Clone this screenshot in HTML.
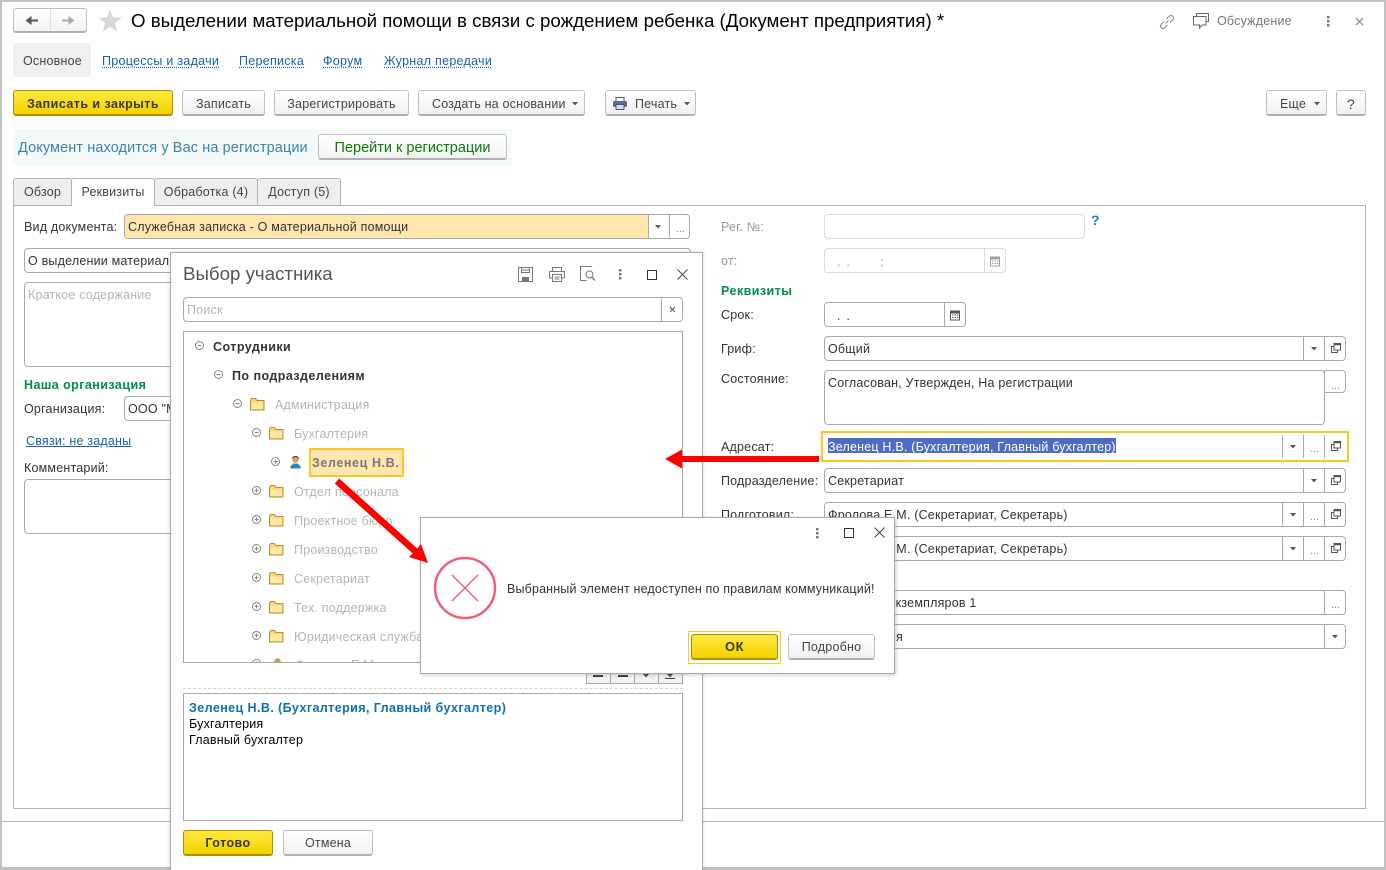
<!DOCTYPE html>
<html lang="ru"><head><meta charset="utf-8"><title>Документ</title>
<style>
html,body{margin:0;padding:0;background:#fff}
#p{position:relative;width:1386px;height:870px;overflow:hidden;background:#fff;font:12.5px/16px "Liberation Sans",sans-serif;color:#333;letter-spacing:.2px}
#p div,#p a,#p span.t{position:absolute;box-sizing:border-box}
.t{white-space:nowrap;height:16px}
.b{height:26px;border:1px solid #c0c0c0;border-bottom:2px solid #b0b0b0;border-radius:3px;background:linear-gradient(#fff,#f1f1f1);text-align:center;line-height:24px;white-space:nowrap;color:#444}
.b.lo{line-height:26px}
.y{border:1px solid #a8900a;border-bottom:2px solid #a8900a;background:linear-gradient(#ffe93f,#f3d000);font-weight:bold;color:#3a3a1a;letter-spacing:.45px}
.f{border:1px solid #a9a9a9;border-radius:4px;background:#fff;height:25px}
.l{border:1px solid #dcdcdc}
.s{width:1px;background:#a9a9a9}
.g{color:#00903f;font-weight:bold;letter-spacing:.45px}
.lnk{color:#1a5fb0;text-decoration:underline dotted;text-underline-offset:2px;letter-spacing:.28px}
.tab{height:27px;top:178px;border:1px solid #b5b5b5;border-bottom:none;border-radius:3px 3px 0 0;background:#eee;text-align:center;line-height:26px;color:#444}
.mut{color:#b5b5b5}
.el{color:#777;font-size:10px;letter-spacing:.2px}
.bd{font-weight:bold;letter-spacing:.45px}
svg{position:absolute;overflow:visible}
</style></head><body>
<div id="p">
<svg width="0" height="0" style="left:0;top:0"><defs>
<g id="dd"><path d="M0 0h6L3 3.500z" fill="#555"/></g>
<g id="op" fill="none" stroke="#555"><path d="M2.500 3.500h-2v6h6v-2"/><path d="M3 .5h6.500v6.500H3z" fill="#fff"/><path d="M3 1.500h6.500" stroke-width="1.500"/></g>
<g id="fo"><path d="M.5 2.500v9.500h13.500v-9.500h-7l-1.500-2h-4z" fill="#f7d67e" stroke="#bd8c2e"/><path d="M1.500 4.500h11.500v6.500h-11.500z" fill="#fde9a6"/></g>
<g id="pl" fill="none" stroke="#888"><circle cx="4.500" cy="4.500" r="4"/><path d="M2.500 4.500h4M4.500 2.500v4"/></g>
<g id="mi" fill="none" stroke="#888"><circle cx="4.500" cy="4.500" r="4"/><path d="M2.500 4.500h4"/></g>
<g id="dots" fill="#777"><rect x="0" y="0" width="2.500" height="2.500"/><rect x="0" y="4" width="2.500" height="2.500"/><rect x="0" y="8" width="2.500" height="2.500"/></g>
<g id="cal"><path d="M.5 2h9v9h-9z" fill="#fff" stroke="#555"/><path d="M.5 1.500h9v3h-9z" fill="#555"/><path d="M2 6h1.500M4.500 6h1.500M7 6h1.500M2 8.500h1.500M4.500 8.500h1.500M7 8.500h1.500" stroke="#555"/></g>
</defs></svg>

<!-- outer frame -->
<div style="left:0;top:0;width:1386px;height:870px;border:2px solid #c0c0c0;border-bottom-width:3px"></div>

<!-- header -->
<div style="left:13px;top:8px;width:74px;height:25px;border:1px solid #c0c0c0;border-bottom:2px solid #b0b0b0;border-radius:3px;background:linear-gradient(#fff,#f3f3f3)"></div>
<div class="s" style="left:50px;top:9px;height:22px;background:#ddd"></div>
<svg style="left:25px;top:15px" width="14" height="11"><path d="M13 5.500H5" stroke="#555" stroke-width="2"/><path d="M6.500 1L.5 5.500l6 4.500z" fill="#555"/></svg>
<svg style="left:61px;top:15px" width="14" height="11"><path d="M1 5.500h8" stroke="#aaa" stroke-width="2"/><path d="M7.500 1l6 4.500-6 4.500z" fill="#aaa"/></svg>
<svg style="left:98px;top:9px" width="24" height="23"><path d="M12 0l3 8.500 9 .2-7.200 5.400 2.600 8.800L12 17.600 4.600 22.900l2.600-8.800L0 8.700l9-.2z" fill="#d8d8d8"/></svg>
<span class="t" style="left:131px;top:10px;height:22px;font-size:18.700px;line-height:22px;color:#000;letter-spacing:0">О выделении материальной помощи в связи с рождением ребенка (Документ предприятия) *</span>
<svg style="left:1159px;top:14px" width="16" height="16" fill="none" stroke="#888"><path d="M6.500 9.500l3-3M5 7.500l-3 3a2.500 2.500 0 0 0 3.500 3.500l3-3M7.500 5l3-3a2.500 2.500 0 0 1 3.500 3.500l-3 3"/></svg>
<svg style="left:1193px;top:13px" width="17" height="16" fill="none" stroke="#666"><path d="M3.500 3V.5h12v8h-2"/><path d="M.5 3.500h12.500v8.500h-4l-2.500 3v-3h-6z" fill="#fff"/></svg>
<span class="t" style="left:1217px;top:13px;color:#777">Обсуждение</span>
<svg style="left:1327px;top:16px" width="3" height="11"><use href="#dots"/></svg>
<svg style="left:1355px;top:17px" width="9" height="9" stroke="#777" fill="none"><path d="M1 1l7 7M8 1l-7 7"/></svg>

<!-- nav -->
<div style="left:13px;top:43px;width:78px;height:34px;background:#f0f0f0;border-radius:3px"></div>
<span class="t" style="left:23px;top:53px;color:#444">Основное</span>
<span class="t lnk" style="left:102px;top:53px">Процессы и задачи</span>
<span class="t lnk" style="left:239px;top:53px">Переписка</span>
<span class="t lnk" style="left:323px;top:53px">Форум</span>
<span class="t lnk" style="left:384px;top:53px">Журнал передачи</span>

<!-- toolbar -->
<div class="b y lo" style="left:13px;top:90px;width:160px">Записать и закрыть</div>
<div class="b lo" style="left:182px;top:90px;width:83px">Записать</div>
<div class="b lo" style="left:274px;top:90px;width:135px">Зарегистрировать</div>
<div class="b lo" style="left:418px;top:90px;width:167px;text-align:left;padding-left:13px">Создать на основании</div>
<svg style="left:572px;top:102px" width="6" height="4"><use href="#dd"/></svg>
<div class="b lo" style="left:605px;top:90px;width:91px;text-align:left;padding-left:29px">Печать</div>
<svg style="left:613px;top:97px" width="14" height="13"><path d="M3 .5h8v4H3z" fill="#fff" stroke="#557"/><rect x="0" y="4" width="14" height="6" rx="1" fill="#5a6f88"/><path d="M3 7.500h8v5H3z" fill="#cfe0f0" stroke="#557"/></svg>
<svg style="left:684px;top:102px" width="6" height="4"><use href="#dd"/></svg>
<div class="b lo" style="left:1266px;top:90px;width:61px;text-align:left;padding-left:13px">Еще</div>
<svg style="left:1314px;top:102px" width="6" height="4"><use href="#dd"/></svg>
<div class="b lo" style="left:1336px;top:90px;width:30px;font-size:14px">?</div>

<!-- notice -->
<div style="left:13px;top:129px;width:499px;height:37px;background:#f3faf7"></div>
<span class="t" style="left:18px;top:140px;font-size:14.500px;color:#3c82ad;letter-spacing:.1px">Документ находится у Вас на регистрации</span>
<div class="b lo" style="left:318px;top:134px;width:189px;font-size:14.500px;color:#0a7a0a;letter-spacing:0">Перейти к регистрации</div>

<!-- main panel -->
<div style="left:13px;top:205px;width:1353px;height:604px;border:1px solid #b5b5b5"></div>
<div class="tab" style="left:13px;width:59px">Обзор</div>
<div class="tab" style="left:71px;width:84px;background:#fff;height:28px;z-index:2">Реквизиты</div>
<div class="tab" style="left:154px;width:104px">Обработка (4)</div>
<div class="tab" style="left:257px;width:84px">Доступ (5)</div>

<!-- left form -->
<span class="t" style="left:24px;top:219px">Вид документа:</span>
<div class="f" style="left:124px;top:214px;width:566px"></div>
<div style="left:125px;top:215px;width:523px;height:23px;background:#ffe6ae;border-radius:3px 0 0 3px"></div>
<div class="s" style="left:648px;top:215px;height:23px"></div><div class="s" style="left:669px;top:215px;height:23px"></div>
<span class="t" style="left:128px;top:219px;color:#333">Служебная записка - О материальной помощи</span>
<svg style="left:655px;top:225px" width="6" height="4"><use href="#dd"/></svg>
<span class="t el" style="left:676px;top:222px">...</span>
<div class="f" style="left:24px;top:248px;width:667px"></div>
<span class="t" style="left:28px;top:253px">О выделении материальной помощи</span>
<div class="f" style="left:24px;top:282px;width:200px;height:85px"></div>
<span class="t mut" style="left:28px;top:287px">Краткое содержание</span>
<span class="t g" style="left:24px;top:377px">Наша организация</span>
<span class="t" style="left:24px;top:401px">Организация:</span>
<div class="f" style="left:124px;top:396px;width:100px"></div>
<span class="t" style="left:128px;top:401px">ООО "Мир"</span>
<span class="t" style="left:26px;top:433px;color:#1a5fb0;text-decoration:underline">Связи: не заданы</span>
<span class="t" style="left:24px;top:460px">Комментарий:</span>
<div class="f" style="left:24px;top:479px;width:200px;height:55px"></div>

<!-- right form -->
<span class="t" style="left:721px;top:219px;color:#999">Рег. №:</span>
<div class="f l" style="left:824px;top:214px;width:261px"></div>
<span class="t" style="left:1091px;top:212px;color:#1a80c0;font-size:14px;font-weight:bold">?</span>
<span class="t" style="left:721px;top:253px;color:#999">от:</span>
<div class="f l" style="left:824px;top:248px;width:182px"></div>
<div class="s" style="left:984px;top:249px;height:23px;background:#dcdcdc"></div>
<span class="t" style="left:837px;top:254px;color:#999;word-spacing:2px">. .</span>
<span class="t" style="left:880px;top:254px;color:#999">:</span>
<svg style="left:990px;top:255px;opacity:.55" width="10" height="12"><use href="#cal"/></svg>

<span class="t g" style="left:721px;top:283px">Реквизиты</span>
<span class="t" style="left:721px;top:307px">Срок:</span>
<div class="f" style="left:824px;top:302px;width:142px"></div>
<div class="s" style="left:944px;top:303px;height:23px"></div>
<span class="t" style="left:837px;top:308px;word-spacing:2px">. .</span>
<svg style="left:950px;top:309px" width="10" height="12"><use href="#cal"/></svg>

<span class="t" style="left:721px;top:341px">Гриф:</span>
<div class="f" style="left:824px;top:336px;width:522px"></div>
<div class="s" style="left:1303px;top:337px;height:23px"></div><div class="s" style="left:1324px;top:337px;height:23px"></div>
<span class="t" style="left:828px;top:341px">Общий</span>
<svg style="left:1311px;top:347px" width="6" height="4"><use href="#dd"/></svg>
<svg style="left:1331px;top:343px" width="10" height="10"><use href="#op"/></svg>

<span class="t" style="left:721px;top:371px">Состояние:</span>
<div class="f" style="left:824px;top:370px;width:501px;height:55px"></div>
<span class="t" style="left:828px;top:375px">Согласован, Утвержден, На регистрации</span>
<div class="f" style="left:1324px;top:370px;width:22px;height:23px;border-radius:0 4px 4px 0"></div>
<span class="t el" style="left:1331px;top:379px">...</span>

<span class="t" style="left:721px;top:439px">Адресат:</span>
<div style="left:821px;top:431px;width:528px;height:31px;border:2px solid #ffc81e"></div>
<div class="s" style="left:1282px;top:435px;height:23px"></div><div class="s" style="left:1303px;top:435px;height:23px"></div><div class="s" style="left:1324px;top:435px;height:23px"></div>
<div style="left:828px;top:438px;width:288px;height:15px;background:#4f6cc2"></div>
<span class="t" style="left:828px;top:439px;color:#fff">Зеленец Н.В. (Бухгалтерия, Главный бухгалтер)</span>
<svg style="left:1290px;top:445px" width="6" height="4"><use href="#dd"/></svg>
<span class="t el" style="left:1310px;top:442px">...</span>
<svg style="left:1331px;top:441px" width="10" height="10"><use href="#op"/></svg>

<span class="t" style="left:721px;top:473px">Подразделение:</span>
<div class="f" style="left:824px;top:468px;width:522px"></div>
<div class="s" style="left:1303px;top:469px;height:23px"></div><div class="s" style="left:1324px;top:469px;height:23px"></div>
<span class="t" style="left:828px;top:473px">Секретариат</span>
<svg style="left:1311px;top:479px" width="6" height="4"><use href="#dd"/></svg>
<svg style="left:1331px;top:475px" width="10" height="10"><use href="#op"/></svg>

<span class="t" style="left:721px;top:507px">Подготовил:</span>
<div class="f" style="left:824px;top:502px;width:522px"></div>
<div class="s" style="left:1282px;top:503px;height:23px"></div><div class="s" style="left:1303px;top:503px;height:23px"></div><div class="s" style="left:1324px;top:503px;height:23px"></div>
<span class="t" style="left:828px;top:507px">Фролова Е.М. (Секретариат, Секретарь)</span>
<svg style="left:1290px;top:513px" width="6" height="4"><use href="#dd"/></svg>
<span class="t el" style="left:1310px;top:510px">...</span>
<svg style="left:1331px;top:509px" width="10" height="10"><use href="#op"/></svg>

<div class="f" style="left:824px;top:536px;width:522px"></div>
<div class="s" style="left:1282px;top:537px;height:23px"></div><div class="s" style="left:1303px;top:537px;height:23px"></div><div class="s" style="left:1324px;top:537px;height:23px"></div>
<span class="t" style="left:828px;top:541px">Фролова Е.М. (Секретариат, Секретарь)</span>
<svg style="left:1290px;top:547px" width="6" height="4"><use href="#dd"/></svg>
<span class="t el" style="left:1310px;top:544px">...</span>
<svg style="left:1331px;top:543px" width="10" height="10"><use href="#op"/></svg>

<div class="f" style="left:824px;top:590px;width:522px"></div>
<div class="s" style="left:1324px;top:591px;height:23px"></div>
<span class="t" style="left:889px;top:595px">экземпляров 1</span>
<span class="t el" style="left:1331px;top:598px">...</span>
<div class="f" style="left:824px;top:624px;width:522px"></div>
<div class="s" style="left:1324px;top:625px;height:23px"></div>
<span class="t" style="left:896px;top:629px">я</span>
<svg style="left:1332px;top:635px" width="6" height="4"><use href="#dd"/></svg>

<!-- footer line -->
<div style="left:2px;top:821px;width:1382px;height:1px;background:#b5b5b5"></div>

<!-- participant dialog -->
<div style="left:170px;top:252px;width:533px;height:630px;background:#fff;border:1px solid #a9a9a9;box-shadow:0 0 4px rgba(0,0,0,.15)"></div>
<span class="t" style="left:183px;top:263px;height:22px;font-size:18.700px;line-height:22px;color:#555;letter-spacing:0">Выбор участника</span>
<svg style="left:518px;top:267px" width="16" height="15" fill="none" stroke="#777"><path d="M.5.500h14v14H.5z"/><path d="M3.500.5v5h8v-5M3.500 3h8"/><rect x="4" y="10" width="7" height="4.500" fill="#777" stroke="none"/></svg>
<svg style="left:549px;top:267px" width="16" height="15" fill="none" stroke="#777"><path d="M3.500 4V.5h9V4"/><path d="M3 11H.5V4.500h15V11H13"/><path d="M3.500 7.500h9v7h-9zM5.500 10h5M5.500 12h5"/></svg>
<svg style="left:580px;top:266px" width="17" height="16" fill="none" stroke="#777"><path d="M7 .5H.5v14h6"/><path d="M7 .5h5"/><circle cx="9.500" cy="8.500" r="3.500"/><path d="M12 11.500l3 3" stroke-width="1.500"/></svg>
<svg style="left:619px;top:269px" width="3" height="11"><use href="#dots"/></svg>
<svg style="left:647px;top:270px" width="10" height="10" fill="none" stroke="#333"><path d="M.5.500h9v9h-9z"/></svg>
<svg style="left:677px;top:269px" width="11" height="11" fill="none" stroke="#444"><path d="M.5.500l10 10M10.500.5l-10 10"/></svg>

<div class="f" style="left:183px;top:297px;width:500px"></div>
<div class="s" style="left:661px;top:298px;height:23px"></div>
<span class="t mut" style="left:187px;top:302px">Поиск</span>
<svg style="left:669px;top:306px" width="7" height="7" stroke="#555" fill="none"><path d="M1 1l5 5M6 1l-5 5"/></svg>

<div style="left:183px;top:331px;width:500px;height:332px;border:1px solid #a9a9a9;overflow:hidden">
</div>
<svg style="left:195px;top:341px" width="9" height="9"><use href="#mi"/></svg>
<span class="t bd" style="left:213px;top:339px;color:#333">Сотрудники</span>
<svg style="left:214px;top:370px" width="9" height="9"><use href="#mi"/></svg>
<span class="t bd" style="left:232px;top:368px;color:#333">По подразделениям</span>
<svg style="left:233px;top:399px" width="9" height="9"><use href="#mi"/></svg>
<svg style="left:250px;top:398px" width="14" height="13"><use href="#fo"/></svg>
<span class="t mut" style="left:275px;top:397px">Администрация</span>
<svg style="left:252px;top:428px" width="9" height="9"><use href="#mi"/></svg>
<svg style="left:269px;top:427px" width="14" height="13"><use href="#fo"/></svg>
<span class="t mut" style="left:294px;top:426px">Бухгалтерия</span>
<svg style="left:271px;top:457px" width="9" height="9"><use href="#pl"/></svg>
<svg style="left:290px;top:456px" width="11" height="13"><circle cx="5.500" cy="3.500" r="3.200" fill="#e0a060"/><path d="M2.500 2.500a3.200 3.200 0 0 1 6 0" stroke="#543" stroke-width="1.200" fill="none"/><path d="M.5 12.500v-2.500l3-2.500h4l3 2.500v2.500z" fill="#2a86c0"/></svg>
<div style="left:309px;top:448px;width:95px;height:29px;background:#ffe6ae;border:2px solid #ffc81e"></div>
<span class="t" style="left:312px;top:455px;font-weight:bold;color:#777;letter-spacing:.6px">Зеленец Н.В.</span>
<svg style="left:252px;top:486px" width="9" height="9"><use href="#pl"/></svg>
<svg style="left:269px;top:485px" width="14" height="13"><use href="#fo"/></svg>
<span class="t mut" style="left:294px;top:484px">Отдел персонала</span>
<svg style="left:252px;top:515px" width="9" height="9"><use href="#pl"/></svg>
<svg style="left:269px;top:514px" width="14" height="13"><use href="#fo"/></svg>
<span class="t mut" style="left:294px;top:513px">Проектное бюро</span>
<svg style="left:252px;top:544px" width="9" height="9"><use href="#pl"/></svg>
<svg style="left:269px;top:543px" width="14" height="13"><use href="#fo"/></svg>
<span class="t mut" style="left:294px;top:542px">Производство</span>
<svg style="left:252px;top:573px" width="9" height="9"><use href="#pl"/></svg>
<svg style="left:269px;top:572px" width="14" height="13"><use href="#fo"/></svg>
<span class="t mut" style="left:294px;top:571px">Секретариат</span>
<svg style="left:252px;top:602px" width="9" height="9"><use href="#pl"/></svg>
<svg style="left:269px;top:601px" width="14" height="13"><use href="#fo"/></svg>
<span class="t mut" style="left:294px;top:600px">Тех. поддержка</span>
<svg style="left:252px;top:631px" width="9" height="9"><use href="#pl"/></svg>
<svg style="left:269px;top:630px" width="14" height="13"><use href="#fo"/></svg>
<span class="t mut" style="left:294px;top:629px">Юридическая служба</span>
<!-- clipped last tree row -->
<div style="left:184px;top:657px;width:498px;height:5px;overflow:hidden">
<svg style="left:68px;top:2px" width="9" height="9"><use href="#pl"/></svg>
<svg style="left:88px;top:1px" width="11" height="13"><circle cx="5.500" cy="3.500" r="3.200" fill="#c99a50"/></svg>
<span class="t mut" style="left:111px;top:0">Фролова Е.М.</span>
</div>

<!-- small toolbar -->
<div style="left:586px;top:664px;width:97px;height:20px;background:#f2f2f2;border:1px solid #a9a9a9"></div>
<div class="s" style="left:610px;top:664px;height:20px"></div><div class="s" style="left:634px;top:664px;height:20px"></div><div class="s" style="left:658px;top:664px;height:20px"></div>
<div style="left:593px;top:675px;width:10px;height:2px;background:#444"></div>
<div style="left:618px;top:675px;width:10px;height:2px;background:#444"></div>
<svg style="left:643px;top:674px" width="6" height="4"><use href="#dd"/></svg>
<div style="left:665px;top:678px;width:10px;height:1px;background:#444"></div>
<svg style="left:667px;top:674px" width="6" height="4"><use href="#dd"/></svg>

<div style="left:183px;top:688px;width:500px;border-top:1px dashed #d5d5d5"></div>
<div style="left:183px;top:693px;width:500px;height:128px;border:1px solid #a9a9a9"></div>
<span class="t bd" style="left:189px;top:700px;color:#106fae;letter-spacing:.42px">Зеленец Н.В. (Бухгалтерия, Главный бухгалтер)</span>
<span class="t" style="left:189px;top:716px;color:#000">Бухгалтерия</span>
<span class="t" style="left:189px;top:732px;color:#000">Главный бухгалтер</span>
<div class="b y" style="left:183px;top:830px;width:90px">Готово</div>
<div class="b" style="left:283px;top:830px;width:90px">Отмена</div>

<!-- message box -->
<div style="left:420px;top:517px;width:475px;height:157px;background:#fff;border:1px solid #a9a9a9;box-shadow:1px 1px 4px rgba(0,0,0,.2)"></div>
<svg style="left:816px;top:528px" width="3" height="11"><use href="#dots"/></svg>
<svg style="left:844px;top:528px" width="10" height="10" fill="none" stroke="#333"><path d="M.5.500h9v9h-9z"/></svg>
<svg style="left:874px;top:527px" width="12" height="12" fill="none" stroke="#444"><path d="M.5.500l10 10M10.500.5l-10 10"/></svg>
<svg style="left:433px;top:556px" width="64" height="64" fill="none" stroke="#f0607a"><circle cx="32" cy="32" r="30" stroke-width="2.500"/><path d="M19 19l26 26M45 19L19 45" stroke-width="1.500"/></svg>
<span class="t" style="left:507px;top:581px;color:#333;letter-spacing:.16px">Выбранный элемент недоступен по правилам коммуникаций!</span>
<div style="left:688px;top:631px;width:93px;height:33px;border:1px solid #ffc81e"></div>
<div class="b y" style="left:691px;top:634px;width:87px;font-size:13px">ОК</div>
<div class="b" style="left:788px;top:634px;width:87px">Подробно</div>

<!-- arrows -->
<svg style="left:0;top:0;z-index:5" width="1386" height="870">
<path d="M819 456v6H682v6.500L665 459l17-9.500v6.500z" fill="#f00"/>
<path d="M334.800 483.500L412.800 553.500 409 557 428 563 421 544 417.200 548.500 339.200 478.500z" fill="#f00"/>
</svg>
</div>
</body></html>
